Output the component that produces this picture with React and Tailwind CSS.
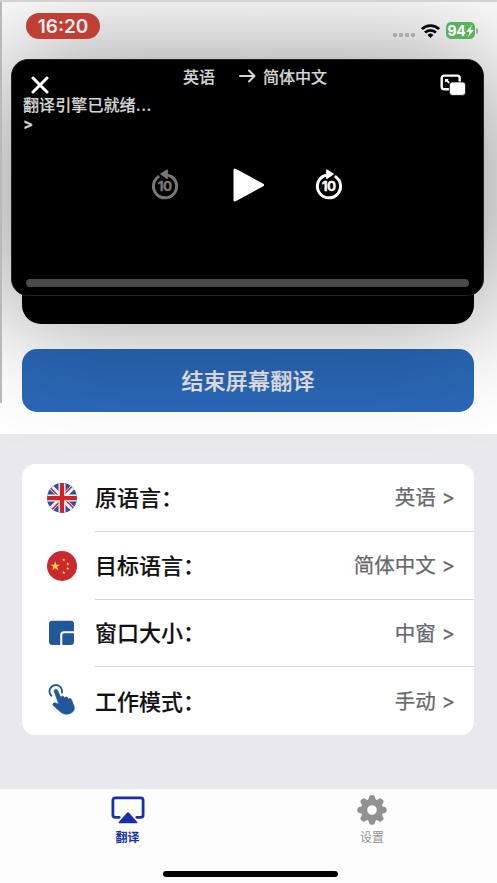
import React from "react";

const WifiIcon = () => (
  <svg width="19" height="14" viewBox="0 0 19 14" fill="none" stroke="#080808" strokeWidth="2.8">
    <path d="M.9 5.1a12.3 12.3 0 0 1 17.2 0" />
    <path d="M4 8.6a7.9 7.9 0 0 1 11 0" />
    <path d="M9.5 13.9 6.6 11a4.2 4.2 0 0 1 5.8 0z" fill="#080808" stroke="none" />
  </svg>
);

const Battery = () => (
  <div className="flex items-center">
    <div className="flex h-[17px] w-[29px] items-center justify-center rounded-[5px] bg-[#58b35d] text-white">
      <span className="text-[14px] leading-none font-bold tracking-[-0.2px]">94</span>
      <svg width="8" height="12" viewBox="0 0 8 12" fill="currentColor"><path d="M5.8 0 .3 6.7h3.1L2.2 12l5.5-6.9H4.6z" /></svg>
    </div>
    <div className="ml-px h-[6px] w-[2px] rounded-r bg-[#a3a3a3]" />
  </div>
);

const Skip = ({ back }) => (
  <svg width="28" height="32" viewBox="0 0 28 32" fill="none">
    <g transform={back ? undefined : "translate(28 0) scale(-1 1)"}>
      <path d="M20.6 8.7A11.6 11.6 0 1 1 7.2 8.9" stroke="currentColor" strokeWidth="3" strokeLinecap="round" />
      <path d="M14.500 7.100q3.300 0 6.100 1.600" stroke="currentColor" strokeWidth="3" />
      <path d="M9.8 6.1 16.200 1.900v8.600z" fill="currentColor" stroke="currentColor" strokeWidth="1.200" strokeLinejoin="round" />
    </g>
    <text x="13.700" y="23.200" textAnchor="middle" fontSize="13.500" fontWeight="700" letterSpacing="-.6" fill="currentColor" stroke="currentColor" strokeWidth=".35" fontFamily="Inter, sans-serif">10</text>
  </svg>
);

const PipIcon = () => (
  <svg width="26" height="22" viewBox="0 0 26 22" fill="none">
    <rect x="1.7" y="1.6" width="18" height="13.6" rx="2.4" stroke="#fff" strokeWidth="2.4" />
    <path d="M5 8.5V5h3.7L7.7 6l2.2 2.2-1.4 1.4-2.3-2.2z" fill="#fff" />
    <rect x="9.4" y="7.900" width="16.2" height="13.5" rx="3.2" fill="#fff" stroke="#000" strokeWidth=".8" />
  </svg>
);

const UkFlag = () => (
  <svg width="30" height="30" viewBox="0 0 60 60">
    <clipPath id="uk"><circle cx="30" cy="30" r="30" /></clipPath>
    <g clipPath="url(#uk)">
      <path fill="#2454a8" d="M0 0h60v60H0z" />
      <path d="m4 4 52 52M56 4 4 56" stroke="#f4f1f3" strokeWidth="10" />
      <path d="m4 7 20 20M53 4 33 24M56 53 36 33M7 56l20-20" stroke="#ce2b32" strokeWidth="3.5" />
      <path d="M30 0v60M0 30h60" stroke="#f4f1f3" strokeWidth="14" />
      <path d="M30 0v60M0 30h60" stroke="#ce2229" strokeWidth="8.5" />
    </g>
  </svg>
);

const STAR = "0,-10 2.35,-3.24 9.51,-3.09 3.8,1.24 5.88,8.09 0,4 -5.88,8.09 -3.8,1.24 -9.51,-3.09 -2.35,-3.24";
const CnFlag = () => (
  <svg width="30" height="30" viewBox="0 0 60 60">
    <circle cx="30" cy="30" r="30" fill="#c8282e" />
    <g fill="#fbd455">
      <polygon points={STAR} transform="translate(16.5 30.5)" />
      <polygon points={STAR} transform="translate(33.5 18) scale(.38)" />
      <polygon points={STAR} transform="translate(41.5 26) scale(.38)" />
      <polygon points={STAR} transform="translate(41.5 35) scale(.38)" />
      <polygon points={STAR} transform="translate(33.5 43) scale(.38)" />
    </g>
  </svg>
);

const WindowIcon = () => (
  <svg width="26" height="26" viewBox="0 0 26 26" fill="#225899">
    <path d="M3.3.8h18.4A3.3 3.3 0 0 1 25 4.1v7.2H15.200a4 4 0 0 0-4 4V25H3.300A3.300 3.300 0 0 1 0 21.700V4.100A3.300 3.300 0 0 1 3.300.800z" />
    <path d="M15 13.300h10v8.400A3.300 3.300 0 0 1 21.700 25h-8.400V15a1.700 1.700 0 0 1 1.700-1.700z" />
  </svg>
);

const TapIcon = () => (
  <svg className="-mt-[4px]" width="28" height="31" viewBox="0 0 28 31" fill="none">
    <path d="M3.4 11.8A6.3 6.3 0 1 1 14 8.500" stroke="#225899" strokeWidth="1.900" strokeLinecap="round" />
    <path d="M6.200 7.400c-.6-2 2.400-3.100 3.300-1.100l3.500 7.500c.1-2 2.700-2.200 3.300-.4l.3.900c.4-1.700 2.900-1.700 3.400.1l.3.900c.7-1.300 2.600-1 3.200.5l2.200 5.500c1.300 3.500.5 6.200-2.600 7.700-3.700 1.900-7.700 1.500-10.800-1.200l-6.600-5.900c-1.800-1.600-.1-3.600 2-2.900l3.200 1.300z" fill="#225899" stroke="#225899" strokeWidth=".7" />
  </svg>
);

const AirplayIcon = () => (
  <svg width="34" height="28" viewBox="0 0 34 28" fill="none">
    <path d="M8.200 21.300H4.300a2.400 2.400 0 0 1-2.400-2.400V4.200a2.400 2.400 0 0 1 2.400-2.400h25.400a2.400 2.400 0 0 1 2.400 2.400v14.700a2.400 2.400 0 0 1-2.400 2.400h-3.900" stroke="#1a30ab" strokeWidth="2.800" strokeLinecap="round" />
    <path d="M16.200 16.600a1.100 1.100 0 0 1 1.600 0l8.400 9.300c.5.600.2 1.400-.6 1.400H8.400c-.8 0-1.100-.8-.6-1.400z" fill="#1a30ab" />
  </svg>
);

const GearIcon = () => (
  <svg width="30" height="30" viewBox="0 0 30 30">
    <g fill="#929292">
      {[0, 45, 90, 135, 180, 225, 270, 315].map((a) => (
        <path key={a} d="M10.500 7 12.200 1.700Q12.600.3 14 .3h2q1.400 0 1.800 1.400L19.500 7z" transform={`rotate(${a} 15 15)`} />
      ))}
      <path fillRule="evenodd" d="M15 4a11 11 0 1 1 0 22 11 11 0 0 1 0-22zm0 6.200a4.800 4.800 0 1 0 0 9.600 4.800 4.800 0 0 0 0-9.600z" />
    </g>
  </svg>
);

const rows = [
  { icon: <UkFlag />, label: "原语言：", value: "英语" },
  { icon: <CnFlag />, label: "目标语言：", value: "简体中文" },
  { icon: <WindowIcon />, label: "窗口大小：", value: "中窗" },
  { icon: <TapIcon />, label: "工作模式：", value: "手动" },
];

const Player = () => (
  <div className="absolute top-[59px] left-[11px] flex h-[237px] w-[473px] flex-col rounded-[17px] border border-[#222] bg-black text-[#d4d4d4] shadow-[0_10px_125px_10px_rgba(0,0,0,0.44)]">
    <div className="flex h-[35px] items-start pt-[6px] pr-[17px] pl-[19px]">
      <svg className="mt-[10px] shrink-0" width="18" height="18" viewBox="0 0 18 18" stroke="#fff" strokeWidth="3" strokeLinecap="round"><path d="m2 2 14 14M16 2 2 16" /></svg>
      <div className="ml-[134px] flex items-center text-[16px] leading-[22px] font-medium [-webkit-text-stroke:0.2px]">
        <span className="w-[56px]">英语</span>
        <svg className="-mt-[3px]" width="17" height="14" viewBox="0 0 17 14" fill="none" stroke="currentColor" strokeWidth="2" strokeLinecap="round" strokeLinejoin="round"><path d="M1 7h14.500M10 1.500 15.500 7 10 12.500" /></svg>
        <span className="ml-[7px]">简体中文</span>
      </div>
      <div className="mt-[8px] ml-auto"><PipIcon /></div>
    </div>
    <div className="h-[39px] pl-[11px] text-[16px] leading-[20px] font-medium [-webkit-text-stroke:0.2px]">
      <p className="tracking-[0.1px]">翻译引擎已就绪<span className="tracking-[0.6px]">...</span></p>
      <p className="text-[15px] leading-[18px] font-bold">&gt;</p>
    </div>
    <div className="mt-[31px] flex h-[40px] items-center pl-[139px]">
      <div className="-mt-[2px] text-[#777]"><Skip back /></div>
      <svg className="mr-[50px] ml-[54px]" width="32" height="36" viewBox="0 0 32 36"><path d="M2 3v30L29.500 18z" fill="#fff" stroke="#fff" strokeWidth="3" strokeLinejoin="round" /></svg>
      <div className="-mt-[2px] text-white"><Skip /></div>
    </div>
    <div className="mt-auto mr-[14px] mb-[8px] ml-[14px] h-[8px] rounded-full bg-[#4a4a4c]" />
  </div>
);

export default function App() {
  return (
    <div className="relative flex h-[883px] w-[497px] flex-col overflow-hidden bg-[#e9e8ee] font-['Inter','Noto_Sans_CJK_SC',sans-serif]">
      <section className="flex h-[434px] flex-col bg-white px-[22px]">
        <header className="h-[59px]" />
        <div className="h-[265px] w-[452px] rounded-[19px] bg-black" />
        <button className="mt-[25px] h-[63px] w-[452px] rounded-[15px] bg-[#2a68b8] pt-px text-[22px] font-medium tracking-[0.2px] text-[#e9e9e9] [-webkit-text-stroke:0.2px]">结束屏幕翻译</button>
      </section>

      <main className="h-[355px] px-[22px] pt-[30px]">
        <div className="w-[452px] rounded-[13px] bg-white">
          {rows.map((row, i) => (
            <div key={row.label} className="flex h-[67.800px] items-center">
              <div className="flex w-[73px] shrink-0 items-center pl-[24px]">
                <div className="flex w-[31px] justify-center">{row.icon}</div>
              </div>
              <div className={`flex h-full flex-1 items-center justify-between pt-[2px] pr-[19px] text-[22px] ${i < 3 ? "border-b-[1.500px] border-[#d7d7d9]" : ""}`}>
                <span className="font-medium text-[#111] [-webkit-text-stroke:0.15px]">{row.label}</span>
                <span className="text-[20.500px] text-[#68686b] [-webkit-text-stroke:0.25px]">{row.value} &gt;</span>
              </div>
            </div>
          ))}
        </div>
      </main>

      <footer className="flex h-[94px] flex-col bg-[#fdfdfd]">
        <nav className="flex pl-[5px]">
          <div className="flex w-[245px] flex-col items-center pt-[7px] text-[12px] leading-[18px] font-bold text-[#1a30ab]">
            <AirplayIcon />
            <span className="mt-[5px]">翻译</span>
          </div>
          <div className="flex w-[244px] flex-col items-center pt-[6px] text-[12px] leading-[18px] text-[#929292]">
            <GearIcon />
            <span className="mt-[4px]">设置</span>
          </div>
        </nav>
        <div className="mx-auto mt-auto mb-[6px] h-[6px] w-[175px] translate-x-[2px] rounded-full bg-black" />
      </footer>

      <Player />

      {/* System status bar, drawn above the floating player's shadow */}
      <div className="absolute inset-x-0 top-0 flex h-[59px] items-start pr-[19px] pl-[26px]">
        <div className="mt-[13px] flex h-[26px] w-[74px] items-center justify-center rounded-full bg-[#c13e34] pt-[2px] text-[19px] font-semibold text-[#efefef]">16:20</div>
        <div className="mt-[22px] ml-auto flex items-center">
          <div className="mt-[9px] mr-[6px] flex gap-[2px]">
            {[0, 1, 2, 3].map((n) => <i key={n} className="size-[4px] rounded-[1px] bg-[#aaa]" />)}
          </div>
          <WifiIcon />
          <div className="ml-[6px]"><Battery /></div>
        </div>
      </div>
      <div className="absolute top-[2px] left-0 h-[401px] w-[2px] bg-[#b9b9b9]" />
      <div className="absolute inset-x-0 top-0 h-[2px] bg-[#d4d3d1]" />
    </div>
  );
}
